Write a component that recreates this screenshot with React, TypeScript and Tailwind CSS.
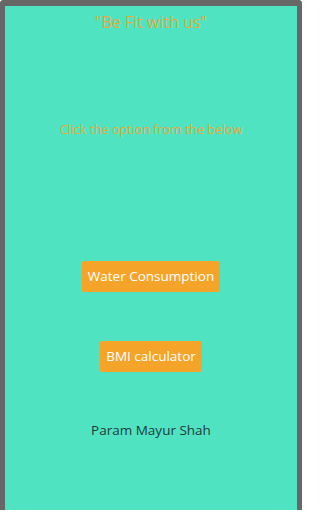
export default function App() {
  return (
    <div className="w-[302px] h-[512px] bg-white" style={{ fontFamily: '"Open Sans", "Noto Sans", sans-serif' }}>
      <div className="h-[510px] border-x-[5px] border-t-[6px] border-[#676767] rounded-t-[4px] bg-[#50e3c2] flex flex-col items-center">
        <h1 className="mt-[5px] text-[16px] leading-[22px] text-[#e6a93b]">"Be Fit with us"</h1>
        <p className="mt-[89px] text-[12.5px] leading-[16px] text-[#e6a93b]">Click the option from the below</p>
        <button className="mt-[123px] h-[31px] px-[6px] bg-[#f5a42a] text-white text-[13.5px] rounded-[2px]">
          Water Consumption
        </button>
        <button className="mt-[49px] h-[31px] px-[6px] bg-[#f5a42a] text-white text-[13.5px] rounded-[2px]">
          BMI calculator
        </button>
        <p className="mt-[48px] text-[13.5px] leading-[20px] text-[#1d3b3a]">Param Mayur Shah</p>
      </div>
    </div>
  )
}
